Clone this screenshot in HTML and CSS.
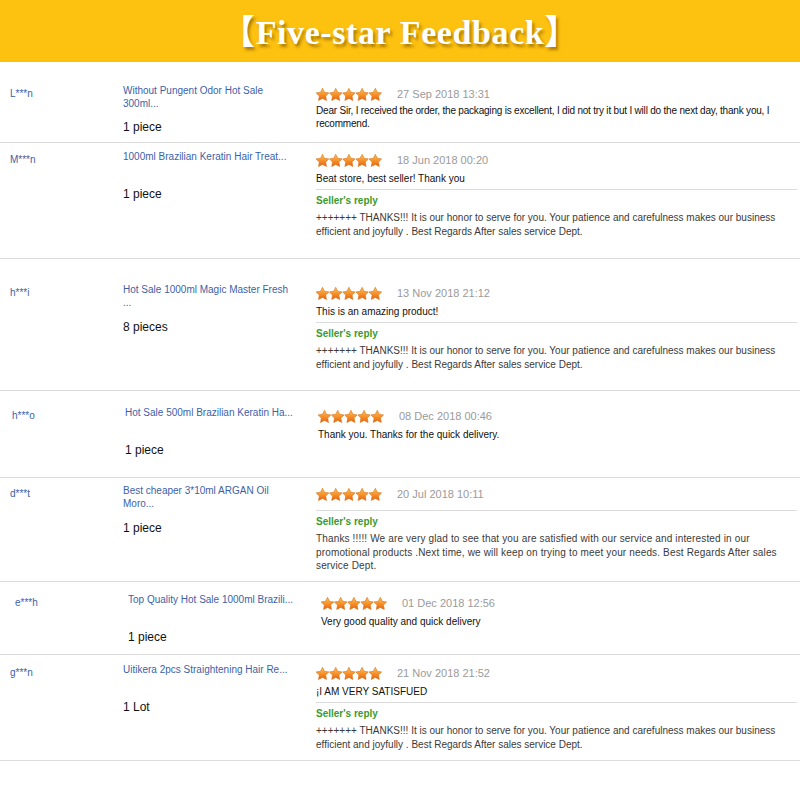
FILE: index.html
```html
<!DOCTYPE html>
<html lang="en">
<head>
<meta charset="utf-8">
<title>Five-star Feedback</title>
<link rel="stylesheet" href="styles.css">
</head>
<body>
<svg class="defs" width="0" height="0" aria-hidden="true">
  <defs>
    <linearGradient id="starfill" x1="0" y1="0" x2="0" y2="1">
      <stop offset="0" stop-color="#fcc35a"/>
      <stop offset="0.5" stop-color="#f7932b"/>
      <stop offset="1" stop-color="#e5610e"/>
    </linearGradient>
    <symbol id="star" viewBox="0 0 13 13">
      <polygon points="6.5,0.3 8.5,4.3 12.9,4.9 9.7,8 10.5,12.5 6.5,10.4 2.5,12.5 3.3,8 0.1,4.9 4.5,4.3" fill="url(#starfill)" stroke="#d8731f" stroke-width="0.6" stroke-linejoin="round"/>
    </symbol>
  </defs>
</svg>

<div class="banner"><h1>【Five-star Feedback】</h1></div>

<div class="feed">

  <div class="fb r1">
    <div class="buyer">L***n</div>
    <div class="item">
      <a class="title" href="#">Without Pungent Odor Hot Sale 300ml...</a>
      <div class="qty">1 piece</div>
    </div>
    <div class="review">
      <div class="head">
        <svg class="stars" width="66" height="13"><use href="#star" x="0" width="13" height="13"/><use href="#star" x="13.2" width="13" height="13"/><use href="#star" x="26.4" width="13" height="13"/><use href="#star" x="39.6" width="13" height="13"/><use href="#star" x="52.8" width="13" height="13"/></svg>
        <span class="date">27 Sep 2018 13:31</span>
      </div>
      <p class="text tight">Dear Sir, I received the order, the packaging is excellent, I did not try it but I will do the next day, thank you, I recommend.</p>
    </div>
  </div>

  <div class="fb r2">
    <div class="buyer">M***n</div>
    <div class="item">
      <a class="title" href="#">1000ml Brazilian Keratin Hair Treat...</a>
      <div class="qty">1 piece</div>
    </div>
    <div class="review">
      <div class="head">
        <svg class="stars" width="66" height="13"><use href="#star" x="0" width="13" height="13"/><use href="#star" x="13.2" width="13" height="13"/><use href="#star" x="26.4" width="13" height="13"/><use href="#star" x="39.6" width="13" height="13"/><use href="#star" x="52.8" width="13" height="13"/></svg>
        <span class="date">18 Jun 2018 00:20</span>
      </div>
      <p class="text">Beat store, best seller! Thank you</p>
      <div class="reply">
        <div class="reply-label">Seller's reply</div>
        <p class="reply-text">+++++++ THANKS!!! It is our honor to serve for you. Your patience and carefulness makes our business efficient and joyfully . Best Regards After sales service Dept.</p>
      </div>
    </div>
  </div>

  <div class="fb r3">
    <div class="buyer">h***i</div>
    <div class="item">
      <a class="title" href="#">Hot Sale 1000ml Magic Master Fresh ...</a>
      <div class="qty">8 pieces</div>
    </div>
    <div class="review">
      <div class="head">
        <svg class="stars" width="66" height="13"><use href="#star" x="0" width="13" height="13"/><use href="#star" x="13.2" width="13" height="13"/><use href="#star" x="26.4" width="13" height="13"/><use href="#star" x="39.6" width="13" height="13"/><use href="#star" x="52.8" width="13" height="13"/></svg>
        <span class="date">13 Nov 2018 21:12</span>
      </div>
      <p class="text">This is an amazing product!</p>
      <div class="reply">
        <div class="reply-label">Seller's reply</div>
        <p class="reply-text">+++++++ THANKS!!! It is our honor to serve for you. Your patience and carefulness makes our business efficient and joyfully . Best Regards After sales service Dept.</p>
      </div>
    </div>
  </div>

  <div class="fb r4">
    <div class="buyer">h***o</div>
    <div class="item">
      <a class="title" href="#">Hot Sale 500ml Brazilian Keratin Ha...</a>
      <div class="qty">1 piece</div>
    </div>
    <div class="review">
      <div class="head">
        <svg class="stars" width="66" height="13"><use href="#star" x="0" width="13" height="13"/><use href="#star" x="13.2" width="13" height="13"/><use href="#star" x="26.4" width="13" height="13"/><use href="#star" x="39.6" width="13" height="13"/><use href="#star" x="52.8" width="13" height="13"/></svg>
        <span class="date">08 Dec 2018 00:46</span>
      </div>
      <p class="text">Thank you. Thanks for the quick delivery.</p>
    </div>
  </div>

  <div class="fb r5">
    <div class="buyer">d***t</div>
    <div class="item">
      <a class="title" href="#">Best cheaper 3*10ml ARGAN Oil Moro...</a>
      <div class="qty">1 piece</div>
    </div>
    <div class="review">
      <div class="head">
        <svg class="stars" width="66" height="13"><use href="#star" x="0" width="13" height="13"/><use href="#star" x="13.2" width="13" height="13"/><use href="#star" x="26.4" width="13" height="13"/><use href="#star" x="39.6" width="13" height="13"/><use href="#star" x="52.8" width="13" height="13"/></svg>
        <span class="date">20 Jul 2018 10:11</span>
      </div>
      <div class="reply no-text">
        <div class="reply-label">Seller's reply</div>
        <p class="reply-text wide">Thanks !!!!! We are very glad to see that you are satisfied with our service and interested in our promotional products .Next time, we will keep on trying to meet your needs. Best Regards After sales service Dept.</p>
      </div>
    </div>
  </div>

  <div class="fb r6">
    <div class="buyer">e***h</div>
    <div class="item">
      <a class="title" href="#">Top Quality Hot Sale 1000ml Brazili...</a>
      <div class="qty">1 piece</div>
    </div>
    <div class="review">
      <div class="head">
        <svg class="stars" width="66" height="13"><use href="#star" x="0" width="13" height="13"/><use href="#star" x="13.2" width="13" height="13"/><use href="#star" x="26.4" width="13" height="13"/><use href="#star" x="39.6" width="13" height="13"/><use href="#star" x="52.8" width="13" height="13"/></svg>
        <span class="date">01 Dec 2018 12:56</span>
      </div>
      <p class="text">Very good quality and quick delivery</p>
    </div>
  </div>

  <div class="fb r7">
    <div class="buyer">g***n</div>
    <div class="item">
      <a class="title" href="#">Uitikera 2pcs Straightening Hair Re...</a>
      <div class="qty">1 Lot</div>
    </div>
    <div class="review">
      <div class="head">
        <svg class="stars" width="66" height="13"><use href="#star" x="0" width="13" height="13"/><use href="#star" x="13.2" width="13" height="13"/><use href="#star" x="26.4" width="13" height="13"/><use href="#star" x="39.6" width="13" height="13"/><use href="#star" x="52.8" width="13" height="13"/></svg>
        <span class="date">21 Nov 2018 21:52</span>
      </div>
      <p class="text">¡I AM VERY SATISFUED</p>
      <div class="reply">
        <div class="reply-label">Seller's reply</div>
        <p class="reply-text">+++++++ THANKS!!! It is our honor to serve for you. Your patience and carefulness makes our business efficient and joyfully . Best Regards After sales service Dept.</p>
      </div>
    </div>
  </div>

</div>
</body>
</html>
```

FILE: styles.css
```css
body { margin: 0; background: #fff; font-family: "Liberation Sans", Arial, sans-serif; color: #111; }
.defs { position: absolute; }

/* banner */
.banner { background: #fdc10f; height: 62px; display: flex; align-items: center; justify-content: center; }
.banner h1 { margin: 0 0 4px; color: #fff; font-family: "Liberation Serif", "Noto Sans CJK SC", serif; font-size: 34px; font-weight: bold; letter-spacing: 0.6px; text-shadow: 2px 3px 3px rgba(110, 70, 0, 0.55); }

/* feedback rows */
.fb { box-sizing: border-box; display: grid; grid-template-columns: 113px 193px 1fr; padding: 0 3px 0 10px; border-bottom: 1px solid #dcdcdc; }
.r1 { height: 81px; padding-top: 25px; }
.r2 { height: 116px; padding-top: 10px; }
.r3 { height: 132px; padding-top: 27px; }
.r4 { height: 87px; padding-top: 18px; padding-left: 12px; }
.r5 { height: 104px; padding-top: 9px; }
.r6 { height: 73px; padding-top: 14px; padding-left: 15px; }
.r7 { height: 106px; padding-top: 11px; }

.buyer { font-size: 10px; line-height: 14px; color: #3d5fa8; }

.item { margin-top: -3px; }
.title { display: block; width: 176px; height: 26px; font-size: 10px; line-height: 13px; color: #3d5fa8; text-decoration: none; }
.qty { margin-top: 10px; font-size: 12px; line-height: 16px; color: #111; }
.r1 .qty { margin-top: 9px; }

.head { display: flex; align-items: center; height: 14px; }
.stars { display: block; }
.date { margin-left: 15px; font-size: 11px; color: #9a9a9a; }

.text { margin: 5px 0 0; font-size: 10px; line-height: 13px; color: #111; }
.tight { margin-top: 3px; letter-spacing: -0.2px; }

.reply { margin-top: 4px; padding-top: 4px; border-top: 1px solid #dcdcdc; }
.reply.no-text { margin-top: 9px; }
.reply-label { font-size: 10px; line-height: 13px; font-weight: bold; color: #3a9a2e; }
.reply-text { margin: 4px 0 0; font-size: 10px; line-height: 13.5px; color: #3a3a3a; }
.wide { letter-spacing: 0.15px; }
```
